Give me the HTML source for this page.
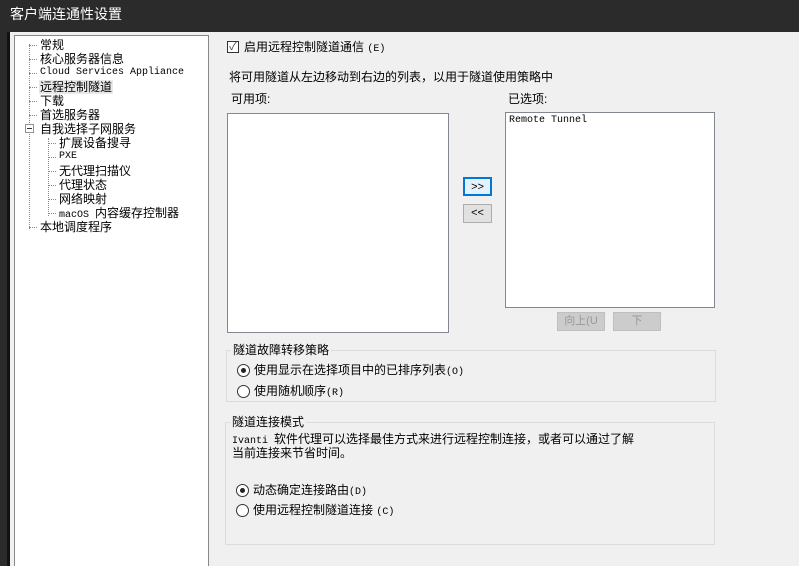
<!DOCTYPE html>
<html><head><meta charset="utf-8"><style>
*{margin:0;padding:0;box-sizing:border-box}
body{width:799px;height:566px;overflow:hidden;background:#f0f0f0;position:relative;font-family:"Liberation Sans","Noto Sans CJK SC",sans-serif;font-size:12px;color:#000}
.a{position:absolute;white-space:nowrap;line-height:14px}
.m{font-family:"Liberation Mono",monospace;font-size:10px}
#title{position:absolute;left:0;top:0;width:799px;height:32px;background:#2b2b2b;color:#fff;font-size:14px;line-height:28px;padding-left:10px}
#strip{position:absolute;left:0;top:32px;width:7px;height:534px;background:#2b2b2b}
#strip2{position:absolute;left:7px;top:32px;width:3px;height:534px;background:#111}
#tree{position:absolute;left:14px;top:35px;width:195px;height:531px;background:#fff;border:1px solid #888;border-bottom:none}
.dl{position:absolute;border-left:1px dotted #888}
.dh{position:absolute;border-top:1px dotted #888;width:8px}
.box{position:absolute;background:#fff;border:1px solid #828790}
.btn{position:absolute;background:#e1e1e1;border:1px solid #adadad;text-align:center;line-height:16px;font-size:11px}
.grp{position:absolute;border:1px solid #dcdcdc}
.rad{position:absolute;width:13px;height:13px;border:1px solid #333;border-radius:50%;background:#fff}
.rad.on::after{content:"";position:absolute;left:3px;top:3px;width:5px;height:5px;border-radius:50%;background:#222}
</style></head><body>
<div id="title">客户端连通性设置</div>
<div id="strip"></div><div id="strip2"></div>
<div id="tree">
<div class="dl" style="left:14px;top:8px;height:185px"></div>
<div class="dl" style="left:33px;top:102px;height:78px"></div>
</div>
<div class="a" style="left:29px;top:38px">
</div>
<div style="position:absolute;left:29px;top:0">
<div class="dh" style="top:45px"></div><div class="dh" style="top:59px"></div><div class="dh" style="top:73px"></div><div class="dh" style="top:87px"></div><div class="dh" style="top:101px"></div><div class="dh" style="top:115px"></div><div class="dh" style="top:227px"></div>
</div>
<div style="position:absolute;left:48px;top:0">
<div class="dh" style="top:143px"></div><div class="dh" style="top:157px"></div><div class="dh" style="top:171px"></div><div class="dh" style="top:185px"></div><div class="dh" style="top:199px"></div><div class="dh" style="top:213px"></div>
</div>
<div style="position:absolute;left:25px;top:124px;width:9px;height:9px;border:1px solid #919191;background:#fff"><div style="position:absolute;left:1px;top:3px;width:5px;height:1px;background:#333"></div></div>
<div class="a" style="left:40px;top:38px">常规</div>
<div class="a" style="left:40px;top:52px">核心服务器信息</div>
<div class="a m" style="left:40px;top:66px">Cloud Services Appliance</div>
<div class="a" style="left:39px;top:80px;background:#e8e8e8;padding:0 1px">远程控制隧道</div>
<div class="a" style="left:40px;top:94px">下载</div>
<div class="a" style="left:40px;top:108px">首选服务器</div>
<div class="a" style="left:40px;top:122px">自我选择子网服务</div>
<div class="a" style="left:59px;top:136px">扩展设备搜寻</div>
<div class="a m" style="left:59px;top:150px">PXE</div>
<div class="a" style="left:59px;top:164px">无代理扫描仪</div>
<div class="a" style="left:59px;top:178px">代理状态</div>
<div class="a" style="left:59px;top:192px">网络映射</div>
<div class="a" style="left:59px;top:206px"><span class="m">macOS </span>内容缓存控制器</div>
<div class="a" style="left:40px;top:220px">本地调度程序</div>

<div style="position:absolute;left:227px;top:41px;width:12px;height:12px;border:1px solid #333;background:#fff;font-size:11px;line-height:10px;text-align:center;color:#444">✓</div>
<div class="a" style="left:244px;top:40px">启用远程控制隧道通信 <span class="m">(E)</span></div>
<div class="a" style="left:229px;top:70px">将可用隧道从左边移动到右边的列表，以用于隧道使用策略中</div>
<div class="a" style="left:231px;top:92px">可用项:</div>
<div class="a" style="left:508px;top:92px">已选项:</div>
<div class="box" style="left:227px;top:113px;width:222px;height:220px"></div>
<div class="box" style="left:505px;top:112px;width:210px;height:196px"></div>
<div class="a m" style="left:509px;top:114px">Remote Tunnel</div>
<div class="btn" style="left:463px;top:177px;width:29px;height:19px;border:2px solid #0078d7;background:#e5f1fb">&gt;&gt;</div>
<div class="btn" style="left:463px;top:204px;width:29px;height:19px">&lt;&lt;</div>
<div class="btn" style="left:557px;top:312px;width:48px;height:19px;background:#ccc;border-color:#bfbfbf;color:#999">向上(U</div>
<div class="btn" style="left:613px;top:312px;width:48px;height:19px;background:#ccc;border-color:#bfbfbf;color:#999">下</div>

<div class="grp" style="left:226px;top:350px;width:490px;height:52px"></div>
<div class="a" style="left:231px;top:343px;background:#f0f0f0;padding:0 2px">隧道故障转移策略</div>
<div class="rad on" style="left:237px;top:364px"></div>
<div class="a" style="left:254px;top:363px">使用显示在选择项目中的已排序列表<span class="m">(O)</span></div>
<div class="rad" style="left:237px;top:385px"></div>
<div class="a" style="left:254px;top:384px">使用随机顺序<span class="m">(R)</span></div>

<div class="grp" style="left:225px;top:422px;width:490px;height:123px"></div>
<div class="a" style="left:230px;top:415px;background:#f0f0f0;padding:0 2px">隧道连接模式</div>
<div class="a" style="left:232px;top:432px"><span class="m">Ivanti </span>软件代理可以选择最佳方式来进行远程控制连接，或者可以通过了解</div>
<div class="a" style="left:232px;top:446px">当前连接来节省时间。</div>
<div class="rad on" style="left:236px;top:484px"></div>
<div class="a" style="left:253px;top:483px">动态确定连接路由<span class="m">(D)</span></div>
<div class="rad" style="left:236px;top:504px"></div>
<div class="a" style="left:253px;top:503px">使用远程控制隧道连接 <span class="m">(C)</span></div>
</body></html>
